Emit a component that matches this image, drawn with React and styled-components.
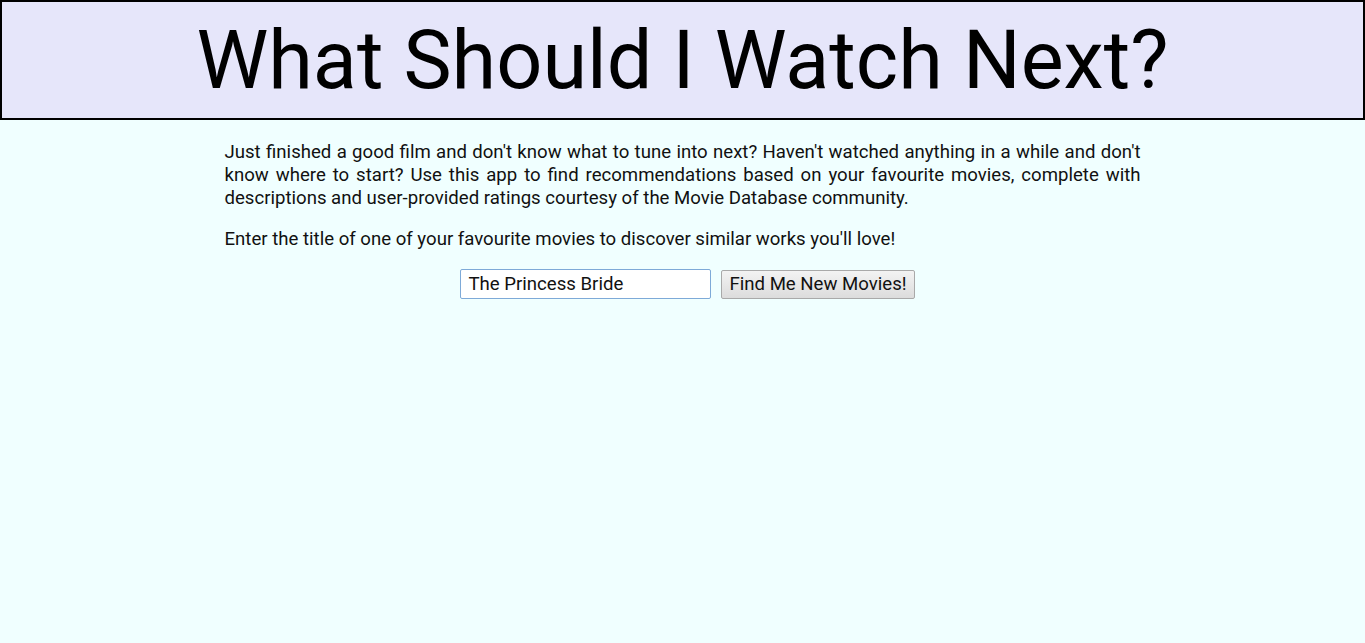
import { useState } from "react";
import styled, { createGlobalStyle } from "styled-components";

const GlobalStyle = createGlobalStyle`
    html, body {
        margin: 0;
        padding: 0;
        background-color: #f0ffff;
        font-family: Roboto, "Liberation Sans", sans-serif;
        color: #111;
    }
`;

const Header = styled.header`
    box-sizing: border-box;
    height: 120px;
    background-color: #e6e6fa;
    border: 2px solid #000;
    display: flex;
    align-items: center;
    justify-content: center;
`;

const Title = styled.h1`
    margin: 0;
    font-size: 81px;
    font-weight: 400;
    color: #000;
    line-height: 1;
`;

const Main = styled.main`
    width: 916px;
    margin: 0 auto;
    padding-top: 21px;
`;

const Text = styled.p`
    font-size: 18.6px;
    line-height: 23px;
    text-align: justify;
    margin: 0 0 18px;
`;

const Form = styled.form`
    display: flex;
    justify-content: center;
    align-items: center;
    gap: 10px;
    padding-left: 10px;
    margin-top: 5px;
`;

const Input = styled.input`
    box-sizing: border-box;
    width: 251px;
    height: 30px;
    padding: 0 7px;
    font-family: Roboto, "Liberation Sans", sans-serif;
    font-size: 18.6px;
    color: #111;
    background: #fff;
    border: 1px solid #7eaad8;
    border-radius: 2px;
    outline: none;
`;

const Button = styled.button`
    box-sizing: border-box;
    height: 29px;
    padding: 0 7px;
    font-family: Roboto, "Liberation Sans", sans-serif;
    font-size: 18.6px;
    color: #111;
    background: linear-gradient(#f3f3f3, #dcdcdc);
    border: 1px solid #a9a9a9;
    border-radius: 2px;
`;

export default () => {
    const [title, setTitle] = useState("The Princess Bride");

    return (
        <>
            <GlobalStyle />
            <Header>
                <Title>What Should I Watch Next?</Title>
            </Header>
            <Main>
                <Text>
                    Just finished a good film and don't know what to tune into next? Haven't watched anything in a while and don't know where to start? Use this app to find recommendations based on your favourite movies, complete with descriptions and user-provided ratings courtesy of the Movie Database community.
                </Text>
                <Text>
                    Enter the title of one of your favourite movies to discover similar works you'll love!
                </Text>
                <Form onSubmit={(e) => e.preventDefault()}>
                    <Input
                        autoFocus
                        value={title}
                        onChange={(e) => setTitle(e.target.value)}
                    />
                    <Button type="submit">Find Me New Movies!</Button>
                </Form>
            </Main>
        </>
    );
};
